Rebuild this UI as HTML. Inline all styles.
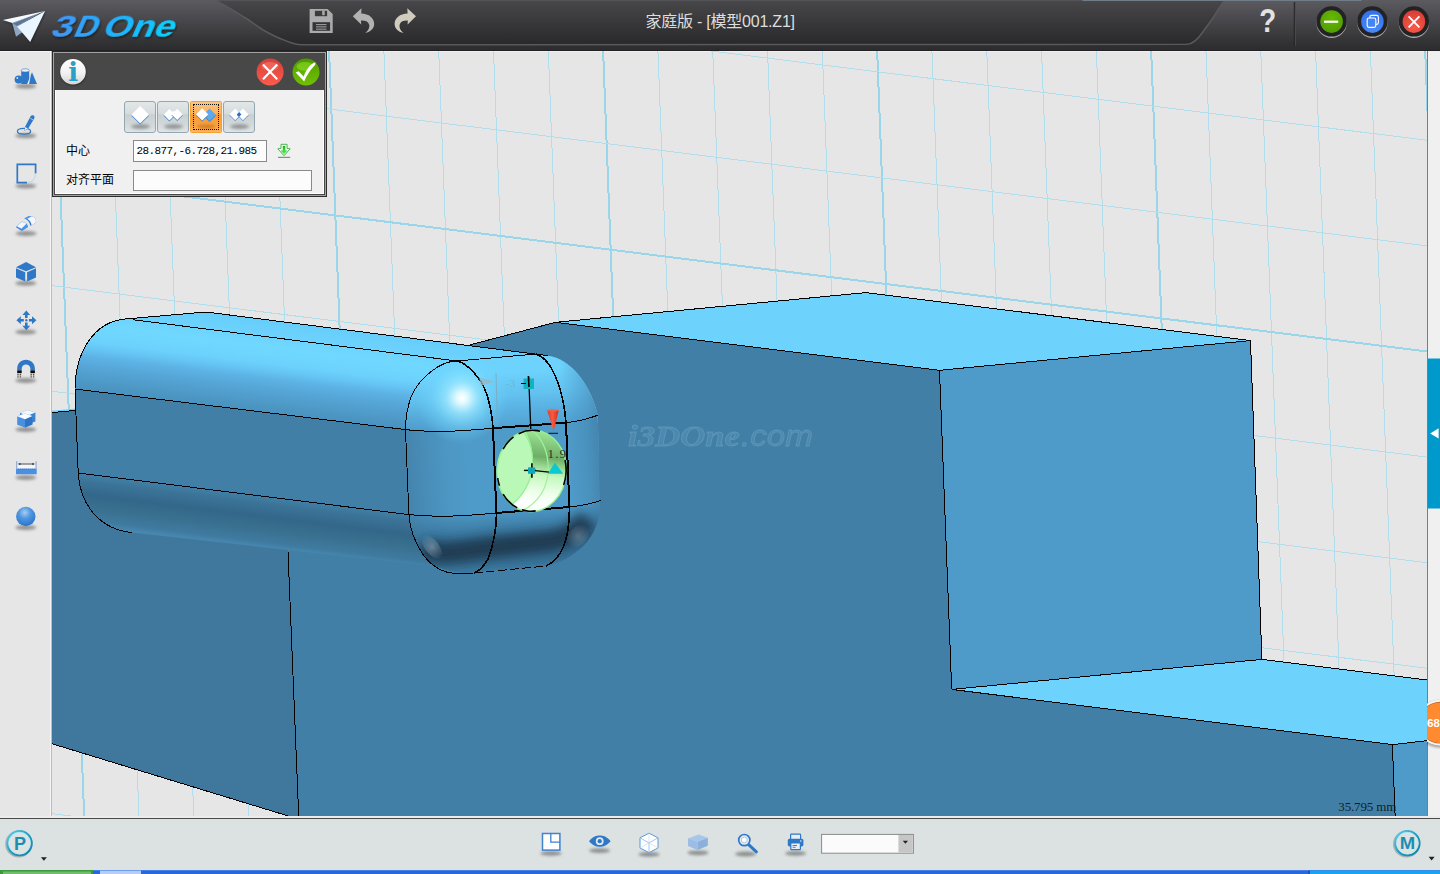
<!DOCTYPE html>
<html lang="zh"><head><meta charset="utf-8"><title>3DOne</title>
<style>
html,body{margin:0;padding:0;}
body{width:1440px;height:874px;overflow:hidden;position:relative;background:#e6e6e6;
 font-family:"Liberation Sans","Noto Sans CJK SC",sans-serif;}
.abs{position:absolute;}
svg{display:block;}
svg text{font-family:"Liberation Sans","Noto Sans CJK SC",sans-serif;}
.gm{stroke:#b1deed;stroke-width:1;shape-rendering:crispEdges;}
.gM{stroke:#99d6ea;stroke-width:2;shape-rendering:crispEdges;}
.e{stroke:#000;stroke-width:1;fill:none;stroke-linecap:butt;stroke-linejoin:round;shape-rendering:crispEdges;}
.eb{stroke:#000;stroke-width:2;fill:none;stroke-linecap:butt;stroke-linejoin:round;shape-rendering:crispEdges;}

.tb{left:0;top:0;width:1440px;height:51px;}
.dlg{left:52px;top:51px;width:275px;height:146px;background:#2c2c2c;}
.dlg .in{position:absolute;left:1px;top:1px;right:1px;bottom:1px;background:#a2a2a2;}
.dlg .hd{position:absolute;left:2px;top:2px;right:2px;height:37px;background:#484848;}
.dlg .bd{position:absolute;left:2px;top:39px;right:2px;bottom:2px;box-sizing:border-box;background:#f0f0f0;border:1px solid #484848;border-top:none;}
.dlg .bd:after{content:"";position:absolute;left:0;top:0;right:0;bottom:0;border:1px solid #fff;border-top:none;}
.lbl{position:absolute;font-size:12px;line-height:14px;color:#000;white-space:nowrap;}
.inp{position:absolute;box-sizing:border-box;border:1px solid #8a8a8a;background:#fcfcfc;}
.inp span{position:absolute;left:2.5px;top:3px;font-family:"Liberation Mono",monospace;font-size:11px;line-height:14px;letter-spacing:-0.6px;color:#000;white-space:nowrap;}
.btn{position:absolute;top:50px;width:31.5px;height:32px;box-sizing:border-box;border:1px solid #93a7b1;border-radius:3px;
 background:linear-gradient(#e2e7e8 0%,#d6dcde 40%,#c9d0d2 42%,#d3d9db 75%,#dfe4e5 100%);}
.btn.on{border-color:#f5a22c;border-radius:1.5px;background:linear-gradient(#fcc47e 0%,#fbb25c 40%,#f89a30 42%,#f9a545 80%,#fbb464 100%);}
.btn.on:after{content:"";position:absolute;left:2px;top:2px;right:2px;bottom:2px;border:1.5px dotted #111;}
.bb{left:0;top:818px;width:1440px;height:52px;background:#dce1e1;border-top:1px solid #4a4a4a;box-sizing:border-box;}

</style></head><body>
<svg class="abs" style="left:0;top:0" width="1440" height="874" viewBox="0 0 1440 874">
<defs>

<linearGradient id="gBody" gradientUnits="userSpaceOnUse" x1="240" y1="316.3" x2="212.2" y2="541.2">
 <stop offset="0" stop-color="#66ccfa"/>
 <stop offset="0.07" stop-color="#6dd3fd"/>
 <stop offset="0.12" stop-color="#70d8ff"/>
 <stop offset="0.19" stop-color="#6cd2fc"/>
 <stop offset="0.225" stop-color="#65c4f4"/>
 <stop offset="0.257" stop-color="#5db3e5"/>
 <stop offset="0.307" stop-color="#55a5d6"/>
 <stop offset="0.374" stop-color="#4d97c4"/>
 <stop offset="0.4070" stop-color="#4a92be"/>
 <stop offset="0.4075" stop-color="#427fa6"/>
 <stop offset="0.7757" stop-color="#427fa6"/>
 <stop offset="0.81" stop-color="#3b7397"/>
 <stop offset="0.865" stop-color="#33678a"/>
 <stop offset="0.92" stop-color="#39708f"/>
 <stop offset="0.975" stop-color="#3f7a9f"/>
 <stop offset="1" stop-color="#4788b1"/>
</linearGradient>
<linearGradient id="gCapX" gradientUnits="userSpaceOnUse" x1="405" y1="470" x2="601" y2="458">
 <stop offset="0" stop-color="#4483ab"/>
 <stop offset="0.10" stop-color="#488db8"/>
 <stop offset="0.22" stop-color="#4d97c4"/>
 <stop offset="0.32" stop-color="#4e9ac8"/>
 <stop offset="0.84" stop-color="#4e9ac8"/>
 <stop offset="0.93" stop-color="#4a92be"/>
 <stop offset="1" stop-color="#4485ae"/>
</linearGradient>
<linearGradient id="gCapTop" gradientUnits="userSpaceOnUse" x1="500" y1="352" x2="506" y2="432">
 <stop offset="0" stop-color="#6dd3fd" stop-opacity="1"/>
 <stop offset="0.25" stop-color="#6dd3fd" stop-opacity="1"/>
 <stop offset="0.55" stop-color="#66c8f6" stop-opacity="0.85"/>
 <stop offset="0.85" stop-color="#5cb8ea" stop-opacity="0.5"/>
 <stop offset="1" stop-color="#56aee0" stop-opacity="0.25"/>
</linearGradient>
<linearGradient id="gCapBot" gradientUnits="userSpaceOnUse" x1="498" y1="508" x2="502.6" y2="574">
 <stop offset="0" stop-color="#3a7aa3" stop-opacity="0"/>
 <stop offset="0.2" stop-color="#37739a" stop-opacity="0.45"/>
 <stop offset="0.5" stop-color="#2f6386" stop-opacity="0.9"/>
 <stop offset="0.8" stop-color="#356e93" stop-opacity="0.95"/>
 <stop offset="1" stop-color="#3f7ca2" stop-opacity="0.95"/>
</linearGradient>
<filter id="bl6" x="-20%" y="-60%" width="140%" height="220%"><feGaussianBlur stdDeviation="5.5"/></filter>
<radialGradient id="gSpec" gradientUnits="userSpaceOnUse" cx="462" cy="398" r="46">
 <stop offset="0" stop-color="#ffffff" stop-opacity="1"/>
 <stop offset="0.12" stop-color="#e8fcff" stop-opacity="0.95"/>
 <stop offset="0.35" stop-color="#9eeaff" stop-opacity="0.75"/>
 <stop offset="0.65" stop-color="#78dcff" stop-opacity="0.4"/>
 <stop offset="1" stop-color="#6dd3fd" stop-opacity="0"/>
</radialGradient>
<radialGradient id="gSpecB" gradientUnits="userSpaceOnUse" cx="432" cy="547" r="14">
 <stop offset="0" stop-color="#a8c4d6" stop-opacity="0.5"/>
 <stop offset="1" stop-color="#a8c0d0" stop-opacity="0"/>
</radialGradient>
<radialGradient id="gSpecC" gradientUnits="userSpaceOnUse" cx="578" cy="536" r="13">
 <stop offset="0" stop-color="#90a8b8" stop-opacity="0.45"/>
 <stop offset="1" stop-color="#90a8b8" stop-opacity="0"/>
</radialGradient>
<linearGradient id="gRightDark" gradientUnits="userSpaceOnUse" x1="560" y1="380" x2="600" y2="376">
 <stop offset="0" stop-color="#4a92be" stop-opacity="0"/>
 <stop offset="0.6" stop-color="#4a92be" stop-opacity="0.5"/>
 <stop offset="1" stop-color="#4585ad" stop-opacity="0.9"/>
</linearGradient>
<linearGradient id="gCyl" gradientUnits="userSpaceOnUse" x1="545" y1="430" x2="535" y2="512">
 <stop offset="0" stop-color="#a4e89c"/>
 <stop offset="0.18" stop-color="#84c87c"/>
 <stop offset="0.33" stop-color="#6eae68"/>
 <stop offset="0.45" stop-color="#9cdc94"/>
 <stop offset="0.55" stop-color="#c4f8be"/>
 <stop offset="0.75" stop-color="#ecffe8"/>
 <stop offset="0.9" stop-color="#ffffff"/>
 <stop offset="1" stop-color="#f4fff0"/>
</linearGradient>
<linearGradient id="gCone" x1="0" y1="0" x2="1" y2="0">
 <stop offset="0" stop-color="#d8382a"/>
 <stop offset="0.45" stop-color="#f85a40"/>
 <stop offset="1" stop-color="#c83020"/>
</linearGradient>
<clipPath id="cSil"><path d="M75,389 C75.5,352 94,321.5 125.5,319 L206,312 L548,355.7 C570,358.5 591,384 597.7,415.3 L600.3,504 C600.6,521 593,537 584,545.5 C572,556.5 560,563.5 546,566 L474,573 C462,574.3 449,571.5 435,566.2 L131.8,532.6 C101,529.5 80,506 78.2,473 Z"/></clipPath>
<clipPath id="cCap"><path d="M457,361 C440,361 419,378 411,397 C407.5,407 405.6,418 405.5,429.6 L408.9,514.6 C409.5,527 413,540 424,556 C433,567 444,573 455,573.3 L474,573 L546,566 C560,563.5 572,556.5 584,545.5 C593,537 600.6,521 600.3,504 L597.7,415.3 C591,384 570,358.5 548,355.7 L536,354 Z"/></clipPath>
<clipPath id="cGreen"><ellipse cx="531.7" cy="470.8" rx="34.7" ry="40.8" transform="rotate(4 531.7 470.8)"/></clipPath>
<filter id="bl1" x="-20%" y="-20%" width="140%" height="140%"><feGaussianBlur stdDeviation="1.2"/></filter>
<filter id="bl3" x="-20%" y="-20%" width="140%" height="140%"><feGaussianBlur stdDeviation="3"/></filter>

<clipPath id="vp"><rect x="52" y="50" width="1375" height="766"/></clipPath>
</defs>
<rect x="0" y="0" width="1440" height="874" fill="#e6e6e6"/>
<rect x="52" y="51" width="1375" height="1" fill="#f0f0f0"/>
<g clip-path="url(#vp)">
<line x1="0.24" y1="50" x2="29.35" y2="816" class="gm"/>
<line x1="55.04" y1="50" x2="84.15" y2="816" class="gM"/>
<line x1="109.85" y1="50" x2="138.96" y2="816" class="gm"/>
<line x1="164.65" y1="50" x2="193.76" y2="816" class="gm"/>
<line x1="219.46" y1="50" x2="248.57" y2="816" class="gm"/>
<line x1="274.26" y1="50" x2="303.37" y2="816" class="gm"/>
<line x1="329.07" y1="50" x2="358.18" y2="816" class="gM"/>
<line x1="383.87" y1="50" x2="412.98" y2="816" class="gm"/>
<line x1="438.68" y1="50" x2="467.79" y2="816" class="gm"/>
<line x1="493.48" y1="50" x2="522.59" y2="816" class="gm"/>
<line x1="548.29" y1="50" x2="577.4" y2="816" class="gm"/>
<line x1="603.09" y1="50" x2="632.2" y2="816" class="gM"/>
<line x1="657.9" y1="50" x2="687.01" y2="816" class="gm"/>
<line x1="712.7" y1="50" x2="741.81" y2="816" class="gm"/>
<line x1="767.51" y1="50" x2="796.62" y2="816" class="gm"/>
<line x1="822.31" y1="50" x2="851.42" y2="816" class="gm"/>
<line x1="877.12" y1="50" x2="906.23" y2="816" class="gM"/>
<line x1="931.92" y1="50" x2="961.03" y2="816" class="gm"/>
<line x1="986.73" y1="50" x2="1015.84" y2="816" class="gm"/>
<line x1="1041.53" y1="50" x2="1070.64" y2="816" class="gm"/>
<line x1="1096.34" y1="50" x2="1125.45" y2="816" class="gm"/>
<line x1="1151.14" y1="50" x2="1180.25" y2="816" class="gM"/>
<line x1="1205.95" y1="50" x2="1235.06" y2="816" class="gm"/>
<line x1="1260.75" y1="50" x2="1289.86" y2="816" class="gm"/>
<line x1="1315.56" y1="50" x2="1344.67" y2="816" class="gm"/>
<line x1="1370.36" y1="50" x2="1399.47" y2="816" class="gm"/>
<line x1="1425.17" y1="50" x2="1454.28" y2="816" class="gM"/>
<line x1="1479.97" y1="50" x2="1509.08" y2="816" class="gm"/>
<line x1="52" y1="-136.76" x2="1427" y2="34.7" class="gm"/>
<line x1="52" y1="-31.16" x2="1427" y2="140.3" class="gm"/>
<line x1="52" y1="74.44" x2="1427" y2="245.9" class="gm"/>
<line x1="52" y1="180.04" x2="1427" y2="351.5" class="gM"/>
<line x1="52" y1="285.64" x2="1427" y2="457.1" class="gm"/>
<line x1="52" y1="391.24" x2="1427" y2="562.7" class="gm"/>
<line x1="52" y1="496.84" x2="1427" y2="668.3" class="gm"/>
<line x1="52" y1="602.44" x2="1427" y2="773.9" class="gm"/>
<line x1="52" y1="708.04" x2="1427" y2="879.5" class="gM"/>
<line x1="52" y1="813.64" x2="1427" y2="985.1" class="gm"/>
<line x1="52" y1="919.24" x2="1427" y2="1090.7" class="gm"/>
<polygon points="52,412.6 76,410.4 300,400 288,552 298.8,818 287.5,815.75 52,743.75" fill="#3f789c"/>
<line x1="52" y1="411.6" x2="76" y2="409.4" stroke="#6dd3fd" stroke-width="1.6"/>
<polygon points="288,552 300,400 467,345.7 555.6,322.3 939.5,370.3 951.7,689.4 1392.4,744.6 1395.2,818 298.8,818" fill="#427fa6"/>
<polygon points="555.6,322.3 866,292.6 1250.5,340.6 939.5,370.3" fill="#6dd3fd"/>
<polygon points="939.5,370.3 1250.5,340.6 1261.9,659.4 951.7,689.4" fill="#4e9ac8"/>
<polygon points="951.7,689.4 1261.9,659.4 1428,680.1 1428,740.6 1392.4,744.6" fill="#6dd3fd"/>
<polygon points="1392.4,744.6 1428,740.6 1428,818 1395.2,818" fill="#4e9ac8"/>
<line x1="555.6" y1="322.3" x2="866" y2="292.6" class="e"/>
<line x1="866" y1="292.6" x2="1250.5" y2="340.6" class="e"/>
<line x1="1250.5" y1="340.6" x2="939.5" y2="370.3" class="e"/>
<line x1="939.5" y1="370.3" x2="555.6" y2="322.3" class="e"/>
<line x1="555.6" y1="322.3" x2="467" y2="345.7" class="e"/>
<line x1="939.5" y1="370.3" x2="951.7" y2="689.4" class="e"/>
<line x1="1250.5" y1="340.6" x2="1261.9" y2="659.4" class="e"/>
<line x1="951.7" y1="689.4" x2="1261.9" y2="659.4" class="e"/>
<line x1="1261.9" y1="659.4" x2="1428" y2="680.1" class="e"/>
<line x1="951.7" y1="689.4" x2="1392.4" y2="744.6" class="e"/>
<line x1="1392.4" y1="744.6" x2="1428" y2="740.6" class="e"/>
<line x1="1392.4" y1="744.6" x2="1395.2" y2="818" class="e"/>
<line x1="288" y1="552" x2="298.8" y2="818" class="e"/>
<line x1="52" y1="743.75" x2="287.5" y2="815.75" class="e"/>
<line x1="52" y1="412.6" x2="76" y2="410.4" class="e"/>
<text x="628" y="446" font-size="30" fill="#5a93b8" fill-opacity="0.55" stroke="#7fb0cf" stroke-opacity="0.45" stroke-width="0.8" opacity="0.9"><tspan style="font-family:'Liberation Serif',serif;font-style:italic;font-weight:bold" textLength="112" lengthAdjust="spacingAndGlyphs">i3DOne</tspan><tspan x="741" style="font-family:'Liberation Sans',sans-serif;font-style:italic" textLength="72" lengthAdjust="spacingAndGlyphs">.com</tspan></text>
<path d="M75,389 C75.5,352 94,321.5 125.5,319 L206,312 L548,355.7 C570,358.5 591,384 597.7,415.3 L600.3,504 C600.6,521 593,537 584,545.5 C572,556.5 560,563.5 546,566 L474,573 C462,574.3 449,571.5 435,566.2 L131.8,532.6 C101,529.5 80,506 78.2,473 Z" fill="url(#gBody)"/>
<g clip-path="url(#cSil)">
<g clip-path="url(#cCap)">
<path d="M457,361 C440,361 419,378 411,397 C407.5,407 405.6,418 405.5,429.6 L408.9,514.6 C409.5,527 413,540 424,556 C433,567 444,573 455,573.3 L474,573 L546,566 C560,563.5 572,556.5 584,545.5 C593,537 600.6,521 600.3,504 L597.7,415.3 C591,384 570,358.5 548,355.7 L536,354 Z" fill="url(#gCapX)"/>
<path d="M400,340 L610,340 L610,414 C590,420 578,421.3 566,422.7 L493,428.2 C480,429.3 468,430.5 455,431 C440,431.6 420,431.3 405.5,429.6 L400,429 Z" fill="url(#gCapTop)"/>
<path d="M548,352 L610,352 L610,414 C590,420 578,421.3 566,422.7 C564.5,405 561.5,392 557.4,381.5 C552.5,368 545,357 536,354 Z" fill="url(#gRightDark)"/>
<path d="M400,514 L408.9,514.6 C422,516 440,516.5 453.5,516 C468,515.5 482,514.3 496.4,513 L569.4,507 C581,505.7 592,503.5 610,499 L610,580 L400,580 Z" fill="url(#gCapBot)"/>
<clipPath id="cBot"><path d="M400,514 L408.9,514.6 C422,516 440,516.5 453.5,516 C468,515.5 482,514.3 496.4,513 L569.4,507 C581,505.7 592,503.5 610,499 L610,580 L400,580 Z"/></clipPath>
<g clip-path="url(#cBot)"><path d="M424,548 C430,552 436,553 442,553 C458,553.5 478,549 493,547.5 L548,541.5 C564,539.5 577,533 588,519" fill="none" stroke="#1b3a50" stroke-opacity="0.95" stroke-width="21" filter="url(#bl6)"/></g>
<circle cx="462" cy="398" r="46" fill="url(#gSpec)"/>
<ellipse cx="432" cy="547" rx="14" ry="7" transform="rotate(52 432 547)" fill="url(#gSpecB)"/>
<ellipse cx="578" cy="536" rx="13" ry="9" transform="rotate(-50 578 536)" fill="url(#gSpecC)"/>
</g></g>
<path d="M131.8,532.6 C101,529.5 80,506 78.2,473 L75,389 C75.5,352 94,321.5 125.5,319 L206,312 L548,355.7" class="e"/>
<path d="M133,319.7 L457,361 L536,354" class="e"/>
<path d="M75,389 L405.5,429.6 C420,431.3 440,431.6 455,431 C468,430.5 480,429.3 493,428.2 L566,422.7 C578,421.3 589,418.5 597.7,415.3" class="e"/>
<path d="M78.2,473 L408.9,514.6 C422,516 440,516.5 453.5,516 C468,515.5 482,514.3 496.4,513 L569.4,507 C581,505.7 592,503.5 600.6,500.6" class="e"/>
<path d="M457,361 C440,361 419,378 411,397 C407.5,407 405.6,418 405.5,429.6 L408.9,514.6 C409.5,527 413,540 424,556 C433,567 444,573 455,573.3 L474,573" class="e"/>
<path d="M457,361 C466,362.5 474,372 481,381.5 C487,392 491.5,408 493,428 L496.4,513 C496.6,526 495,540 488,559 C484,566 479.5,571 474,573" class="e" style="stroke-width:1.6"/>
<path d="M536,354 C545,357 552.5,368 557.4,381.5 C561.5,392 564.5,405 566,422.7 L569.4,507 C569.6,520 568,535 563.4,547 C560,555 554,562.5 546,566" class="e" style="stroke-width:1.6"/>
<path d="M474,573 L546,566" class="e" style="stroke-dasharray:9 3"/>
<path d="M493,428.2 L566,422.7 L569.4,507 L496.4,513 Z" class="eb"/>
<polygon points="479,377.5 495,381.5 481,386" fill="#9ab6bf" fill-opacity="0.75"/>
<line x1="496" y1="373" x2="497.5" y2="425" stroke="#7fa6b8" stroke-width="1" stroke-opacity="0.8"/>
<text x="506" y="387" font-size="11" style="font-family:'Liberation Serif',serif" fill="#6fb6d6">-3</text>
<line x1="528.7" y1="377" x2="530.8" y2="429.5" stroke="#000" stroke-width="1.3"/>
<rect x="523.5" y="378.5" width="10.5" height="10.5" fill="#10b4c0"/>
<line x1="521" y1="383.5" x2="526" y2="383.5" stroke="#000" stroke-width="1"/>
<line x1="528.4" y1="376" x2="529" y2="387" stroke="#000" stroke-width="1.6"/>
<g>
<ellipse cx="531.7" cy="470.8" rx="34.7" ry="40.8" transform="rotate(4 531.7 470.8)" fill="#b9f8b6"/>
<g clip-path="url(#cGreen)">
<path d="M522.8,428 C532,440 533.5,455 532.5,465 C531,483 523,496 510,506 L520,520 L575,520 L575,425 Z" fill="url(#gCyl)"/>
<path d="M522.8,431 C531,441 533.5,455 532.5,465 C531,483 523,496 511,505" fill="none" stroke="#90ee90" stroke-width="1.2"/>
<path d="M533,430.5 C545,442 549,458 548,473 C546.5,490 537,503 522,511" fill="none" stroke="#9df29a" stroke-width="1.2"/>
</g>
<ellipse cx="531.7" cy="470.8" rx="34.7" ry="40.8" transform="rotate(4 531.7 470.8)" fill="none" stroke="#98f090" stroke-width="1.4"/>
<ellipse cx="531.7" cy="470.8" rx="34.4" ry="40.5" transform="rotate(4 531.7 470.8)" fill="none" stroke="#000" stroke-width="1.6" stroke-dasharray="14 5 20 9 8 30 16 6 22 40" stroke-dashoffset="118"/>
</g>
<text x="547.5" y="458.4" font-size="13" style="font-family:'Liberation Serif',serif" fill="#18241a" fill-opacity="0.9" textLength="18.5">1.9</text>
<line x1="523.9" y1="470.4" x2="536" y2="470.4" stroke="#000" stroke-width="1.4"/>
<line x1="531.9" y1="463.2" x2="531.9" y2="477.8" stroke="#000" stroke-width="1.6"/>
<rect x="528" y="467.4" width="7.2" height="6.4" fill="#10a8b8"/>
<line x1="535" y1="470.6" x2="549" y2="472.2" stroke="#000" stroke-width="1.2"/>
<polygon points="554.8,462.6 563.2,473.8 548,473.8" fill="#0cc8d0"/>
<polygon points="547.2,410.2 558.8,410.2 553.6,431.5" fill="url(#gCone)"/>
<ellipse cx="553" cy="410.4" rx="5.8" ry="1.2" fill="#f0604a"/>
<line x1="548.5" y1="433.3" x2="558" y2="433.3" stroke="#000" stroke-width="0.9"/>
<text x="1338.3" y="810.6" font-size="13" style="font-family:'Liberation Serif',serif" fill="#0a1620" fill-opacity="0.95" textLength="58" lengthAdjust="spacing">35.795 mm</text>
</g>
<rect x="0" y="50" width="51" height="768" fill="#e6e6e6"/>
<rect x="50" y="51" width="1" height="766" fill="#f5f5f5"/>
<rect x="51" y="51" width="1" height="766" fill="#a9c1d0"/>
<rect x="1427" y="50" width="13" height="768" fill="#f0f0f0"/>
<rect x="1427" y="50" width="1" height="767" fill="#7c7c7c"/>
<rect x="1428" y="358.5" width="12" height="150" fill="#0099cc"/>
<polygon points="1430.2,433.4 1438.6,428.2 1438.6,438.6" fill="#ffffff"/>
<rect x="0" y="51" width="51" height="1" fill="#f4f4f4"/>
<rect x="0" y="816" width="1440" height="2" fill="#ececec"/>
<clipPath id="cBub"><rect x="1427" y="680" width="13" height="90"/></clipPath>
<g clip-path="url(#cBub)">
<circle cx="1440" cy="724.2" r="23.6" fill="#000" fill-opacity="0.3" filter="url(#bl1)"/>
<circle cx="1440" cy="722.7" r="22.9" fill="#f4f4f4"/>
<circle cx="1440" cy="722.7" r="20.9" fill="#c9631e"/>
<circle cx="1440" cy="722.7" r="20.2" fill="#ff8a30"/>
<text x="1427.2" y="726.5" font-size="10.8" font-weight="bold" fill="#fff" textLength="12.6" lengthAdjust="spacingAndGlyphs">68</text>
</g>
</svg>
<svg class="abs tb" width="1440" height="51" viewBox="0 0 1440 51">
<defs>
<linearGradient id="tbO" x1="0" y1="0" x2="0" y2="1"><stop offset="0" stop-color="#5b5b60"/><stop offset="0.5" stop-color="#434346"/><stop offset="0.9" stop-color="#2f2f31"/><stop offset="1" stop-color="#2c2c2e"/></linearGradient>
<linearGradient id="tbI" x1="0" y1="0" x2="0" y2="1"><stop offset="0" stop-color="#48484b"/><stop offset="0.5" stop-color="#38383a"/><stop offset="1" stop-color="#29292b"/></linearGradient>
<linearGradient id="logoG" gradientUnits="userSpaceOnUse" x1="53" y1="0" x2="175" y2="0"><stop offset="0" stop-color="#3f97f8"/><stop offset="0.35" stop-color="#28aafc"/><stop offset="0.7" stop-color="#14c0fe"/><stop offset="1" stop-color="#08d4ff"/></linearGradient>
<radialGradient id="gGreen" cx="0.5" cy="0.35" r="0.7"><stop offset="0" stop-color="#66b800"/><stop offset="1" stop-color="#4e9c00"/></radialGradient>
<radialGradient id="gBlue" cx="0.5" cy="0.75" r="0.8"><stop offset="0" stop-color="#4f8ff8"/><stop offset="1" stop-color="#2f6fe8"/></radialGradient>
<radialGradient id="gRed" cx="0.5" cy="0.75" r="0.8"><stop offset="0" stop-color="#f85a4a"/><stop offset="1" stop-color="#d83a30"/></radialGradient>
<filter id="tsh" x="-10%" y="-20%" width="120%" height="150%"><feGaussianBlur stdDeviation="1.2"/></filter><filter id="lsh" x="-10%" y="-30%" width="120%" height="170%"><feGaussianBlur in="SourceAlpha" stdDeviation="1.2"/><feOffset dx="1.6" dy="1.6"/><feComponentTransfer><feFuncA type="linear" slope="0.4"/></feComponentTransfer><feMerge><feMergeNode/><feMergeNode in="SourceGraphic"/></feMerge></filter>
</defs>
<rect width="1440" height="51" fill="url(#tbO)"/><rect y="50" width="1440" height="1" fill="#222224"/>
<path d="M215.4,0 C228,7 238,13.5 246.7,18.75 C254,23.5 259,27.5 265.4,31.25 C272,35 278,38 284.2,40.1 C290,42.5 294,44.6 302,44.8 L1187,44.3 C1192,44.1 1197,40.5 1202.8,32 C1206,27.5 1209,23.5 1211,20.8 C1215,14.5 1219.5,7.5 1224.5,0 Z" fill="url(#tbI)" stroke="#58585d" stroke-width="1.5"/>
<rect x="1082.5" y="0" width="279" height="1" fill="#707c88"/>
<g>
<polygon points="3.5,21.5 46,12.2 31,43 17.5,27.5 16.5,37.5 12,24" fill="#000" fill-opacity="0.35" filter="url(#tsh)"/>
<polygon points="12.2,22.9 41,12.2 18,26 22.2,32.3 16,36.8" fill="#8fa6c4"/>
<polygon points="13,23.5 38,13.5 17.2,26" fill="#5c7596"/>
<polygon points="2.9,20.1 45.1,11 12.2,22.9" fill="#f4faff"/>
<polygon points="17,26.4 45.1,11 30.2,42" fill="#e9f5ff"/>
</g>
<g transform="translate(0,36.7) skewX(-24)" fill="url(#logoG)" filter="url(#lsh)"><text y="0" font-size="30.6" font-weight="bold"><tspan x="49" textLength="21.5" lengthAdjust="spacingAndGlyphs">3</tspan><tspan x="72" textLength="23" lengthAdjust="spacingAndGlyphs">D</tspan><tspan x="100.8" font-size="31" textLength="71.5" lengthAdjust="spacingAndGlyphs">One</tspan></text></g>
<g fill="#ababab"><path d="M309.6,8.9 L327.5,8.9 L332.7,14 L332.7,33 L309.6,33 Z"/></g>
<rect x="314.9" y="10.8" width="12.2" height="5.4" fill="#3a3a3d"/>
<rect x="322.2" y="10.8" width="2.5" height="4.4" fill="#ababab"/>
<rect x="312.5" y="22.2" width="17.6" height="8.6" fill="#343437"/>
<rect x="316" y="24.0" width="10.5" height="1.1" fill="#9a9a9a"/>
<rect x="316" y="26.3" width="10.5" height="1.1" fill="#9a9a9a"/>
<rect x="316" y="28.6" width="10.5" height="1.1" fill="#9a9a9a"/>
<path d="M352.8,16.2 L361.5,8.3 L361.2,13.4 C369,13.6 374.4,18 374.2,24 C374,29 370,32 365.2,33 C368.5,30.5 370,27 369,24.2 C368,21.4 365,20.4 361,20.6 L361.2,24.4 Z" fill="#b2b2b2"/>
<path d="M416,16.2 L407.3,8.3 L407.6,13.4 C399.8,13.6 394.4,18 394.6,24 C394.8,29 398.8,32 403.6,33 C400.3,30.5 398.8,27 399.8,24.2 C400.8,21.4 403.8,20.4 407.8,20.6 L407.6,24.4 Z" fill="#cfccbd"/>
<text x="645.5" y="27" font-size="16" fill="#dedede" textLength="149.5" lengthAdjust="spacing">家庭版 - [模型001.Z1]</text>
<text transform="translate(1267.6,32.4) scale(0.84,1)" x="0" y="0" font-size="33" font-weight="bold" fill="#e2e2e2" text-anchor="middle">?</text>
<rect x="1293.8" y="2" width="1" height="44" fill="#1d1d1f"/><rect x="1294.8" y="2" width="1" height="44" fill="#4c4c50"/>
<circle cx="1331.6" cy="22.8" r="15.2" fill="#a8a8a8"/>
<circle cx="1331.6" cy="21.4" r="15.2" fill="#232325"/>
<circle cx="1331.6" cy="21.6" r="11.3" fill="url(#gGreen)"/>
<circle cx="1372.4" cy="22.8" r="15.2" fill="#a8a8a8"/>
<circle cx="1372.4" cy="21.4" r="15.2" fill="#232325"/>
<circle cx="1372.4" cy="21.6" r="11.3" fill="url(#gBlue)"/>
<circle cx="1413.9" cy="22.8" r="15.2" fill="#a8a8a8"/>
<circle cx="1413.9" cy="21.4" r="15.2" fill="#232325"/>
<circle cx="1413.9" cy="21.6" r="11.3" fill="url(#gRed)"/>
<rect x="1324" y="20.6" width="14.2" height="2.2" fill="#fff"/>
<rect x="1369.8" y="15.4" width="8.6" height="9" rx="1.8" fill="none" stroke="#fff" stroke-width="1.1"/>
<rect x="1367.2" y="18" width="8.6" height="9.4" rx="1.8" fill="#4585f4" stroke="#fff" stroke-width="1.1"/>
<path d="M1408.6,16.4 L1419.4,27.4 M1419.4,16.4 L1408.6,27.4" stroke="#fff" stroke-width="1.8" fill="none"/>
</svg>
<svg class="abs" style="left:0;top:50px" width="52" height="767" viewBox="0 50 52 767">
<defs><filter id="isd" x="-50%" y="-150%" width="200%" height="400%"><feGaussianBlur stdDeviation="1.5"/></filter><radialGradient id="gBall" cx="0.45" cy="0.3" r="0.7"><stop offset="0" stop-color="#a6cdf2"/><stop offset="0.45" stop-color="#4f95e0"/><stop offset="1" stop-color="#2b74cc"/></radialGradient></defs>
<ellipse cx="25.8" cy="86.2" rx="10.5" ry="2.5" fill="#000" fill-opacity="0.36" filter="url(#isd)"/>
<circle cx="18.6" cy="79.6" r="4" fill="#2f78c8"/>
<circle cx="17.3" cy="78" r="0.9" fill="#cfe2f6"/>
<path d="M21.2,70.5 L29.2,70.5 L29.2,84 L21.2,84 Z" fill="#2f78c8"/>
<ellipse cx="25.2" cy="70.4" rx="4" ry="1.6" fill="#eef4fb" stroke="#2f78c8" stroke-width="0.6"/>
<polygon points="32,72.3 37,84 27,84" fill="#2f78c8"/>
<polygon points="31,74.5 27.2,84 29,84" fill="#f2f6fb"/>
<ellipse cx="25.8" cy="135.8" rx="10.5" ry="2.5" fill="#000" fill-opacity="0.36" filter="url(#isd)"/>
<ellipse cx="24" cy="131.3" rx="6.6" ry="2.9" fill="none" stroke="#2f78c8" stroke-width="1.3"/>
<path d="M24.2,131 L25.2,126.6 L30.6,116.2 C31.2,115.2 32.6,115 33.6,115.6 C34.6,116.2 34.8,117.4 34.2,118.4 L28.2,128.4 Z" fill="#2f78c8"/>
<path d="M24.4,130.6 L25.4,127 L27.8,128.4 Z" fill="#e8f0fa"/>
<path d="M30.2,118.2 L33.2,120" stroke="#dbe8f6" stroke-width="0.7"/>
<ellipse cx="25.8" cy="186" rx="10.5" ry="2.5" fill="#000" fill-opacity="0.36" filter="url(#isd)"/>
<path d="M27,182.6 L17.3,182.6 L17.3,164.4 L35.6,164.4 L35.6,173.5" fill="none" stroke="#2f78c8" stroke-width="1.7"/>
<path d="M35.6,173.5 C35.4,178.8 32,182.4 27,182.6" fill="none" stroke="#c8d8ea" stroke-width="1.4"/>
<ellipse cx="26.1" cy="233.4" rx="10.5" ry="2.5" fill="#000" fill-opacity="0.36" filter="url(#isd)"/>
<polygon points="16,227.2 21.1,230.4 22.1,230.8 27.9,227 26.8,223.4 21.7,221.6 16.6,226.3" fill="#3c84d6"/>
<polygon points="21.4,228.9 26.8,223.4 27.9,227 22.1,230.8" fill="#4f95e4"/>
<polygon points="16.7,226.3 21.7,221.7 26.7,223.4 21.4,228.8" fill="#f3f7fc"/>
<path d="M24.3,218.6 L29,215.9 L31.6,216.3 C34,216.6 36,218.4 36,220.6 C36,222.6 34,224.4 31.6,225.3 L30.4,225.7 C29.6,222 27.6,219.6 24.3,218.6 Z" fill="#2f78cc"/>
<path d="M24.3,218.6 L29,215.9 L31.6,216.3 L27.2,219 Z" fill="#5a9ee8"/>
<path d="M27.2,219 L31.6,216.3 C34,216.6 36,218.4 36,220.6 C36,222.6 34,224.4 31.6,225.3 C31.2,222.4 29.8,220.2 27.2,219 Z" fill="#f3f7fc"/>
<ellipse cx="25.8" cy="283.2" rx="10.5" ry="2.5" fill="#000" fill-opacity="0.36" filter="url(#isd)"/>
<polygon points="26.1,262 36,267.2 26.1,271.2 16,267.2" fill="#2f78c8"/>
<polygon points="16,268.3 25.2,272.3 25.2,281.5 16,277.5" fill="#2f78c8"/>
<polygon points="27.1,272.3 36,268.3 36,277.5 27.1,281.5" fill="#2f78c8"/>
<ellipse cx="25.8" cy="332" rx="10.5" ry="2.5" fill="#000" fill-opacity="0.36" filter="url(#isd)"/>
<g fill="#2f78c8"><polygon points="26.3,310.6 30.2,315 27.6,315 27.6,318 25,318 25,315 22.4,315"/><polygon points="26.3,330.2 30.2,325.8 27.6,325.8 27.6,322.6 25,322.6 25,325.8 22.4,325.8"/><polygon points="16.4,320.2 20.8,316.2 20.8,318.9 23.8,318.9 23.8,321.5 20.8,321.5 20.8,324.2"/><polygon points="36.4,320.2 32,316.2 32,318.9 28.9,318.9 28.9,321.5 32,321.5 32,324.2"/><circle cx="26.3" cy="320.2" r="1.2"/></g>
<ellipse cx="25.8" cy="380.4" rx="10.5" ry="2.5" fill="#000" fill-opacity="0.36" filter="url(#isd)"/>
<path d="M17.2,370.4 L17.2,368.6 C17.2,363.4 21,359.8 26,359.8 C31,359.8 34.9,363.4 34.9,368.6 L34.9,370.4 L30.4,370.4 L30.4,368.8 C30.4,366 28.6,364.4 26,364.4 C23.4,364.4 21.7,366 21.7,368.8 L21.7,370.4 Z" fill="#2f78c8"/>
<rect x="17.2" y="370.4" width="4.5" height="2.7" fill="#0a0a0a"/><rect x="30.4" y="370.4" width="4.5" height="2.7" fill="#0a0a0a"/>
<line x1="18.0" y1="373.8" x2="18.0" y2="378" stroke="#555" stroke-width="1.4" stroke-dasharray="1.1 0.7"/>
<line x1="20.4" y1="373.8" x2="20.4" y2="378" stroke="#555" stroke-width="1.4" stroke-dasharray="1.1 0.7"/>
<line x1="31.2" y1="373.8" x2="31.2" y2="378" stroke="#555" stroke-width="1.4" stroke-dasharray="1.1 0.7"/>
<line x1="33.6" y1="373.8" x2="33.6" y2="378" stroke="#555" stroke-width="1.4" stroke-dasharray="1.1 0.7"/>
<ellipse cx="25.8" cy="429.5" rx="10.5" ry="2.5" fill="#000" fill-opacity="0.36" filter="url(#isd)"/>
<polygon points="20,413 27.4,410 35.4,412.6 35.4,421.4 28.6,424 20,421.4" fill="#3b82d2"/>
<polygon points="20,413 27.4,410 35.4,412.6 28,415.6" fill="#f4f8fd"/>
<polygon points="17.2,416.2 24.6,413.4 32.4,416 32.4,424.4 25,427.5 17.2,424.8" fill="#4a90e0"/>
<polygon points="25,419.2 32.4,416 32.4,424.4 25,427.5" fill="#2f74c4"/>
<polygon points="17.2,416.2 24.6,413.4 32.4,416 25,419.2" fill="#fafcff"/>
<ellipse cx="25.8" cy="477.6" rx="10.5" ry="2.5" fill="#000" fill-opacity="0.36" filter="url(#isd)"/>
<rect x="16" y="464.4" width="20.7" height="4.4" fill="#f6f6f6"/>
<rect x="16" y="468.6" width="20.7" height="5.6" fill="#4a90e2"/>
<rect x="16" y="461.2" width="1.3" height="8" fill="#8fb0d8"/><rect x="35.4" y="461.2" width="1.3" height="8" fill="#8fb0d8"/>
<line x1="18.6" y1="464" x2="34.2" y2="464" stroke="#444" stroke-width="0.9"/>
<polygon points="18.2,464 20.4,462.8 20.4,465.2" fill="#333"/><polygon points="34.6,464 32.4,462.8 32.4,465.2" fill="#333"/>
<line x1="18" y1="469.3" x2="35" y2="469.3" stroke="#2d6cb8" stroke-width="0.7" stroke-dasharray="0.8 1.2"/>
<ellipse cx="25.8" cy="527.6" rx="10.5" ry="2.5" fill="#000" fill-opacity="0.36" filter="url(#isd)"/>
<circle cx="25.8" cy="516.5" r="9.7" fill="url(#gBall)"/>
</svg>
<div class="abs dlg"><div class="in"></div><div class="hd"></div><div class="bd"></div>
<svg style="position:absolute;left:0;top:0" width="275" height="40" viewBox="52 51 275 40"><defs><linearGradient id="gInfo" x1="0" y1="0" x2="0" y2="1"><stop offset="0" stop-color="#ffffff"/><stop offset="0.55" stop-color="#f2f2f2"/><stop offset="1" stop-color="#d4d4d4"/></linearGradient><linearGradient id="gX" x1="0" y1="0" x2="0" y2="1"><stop offset="0" stop-color="#cf433b"/><stop offset="0.45" stop-color="#e84c42"/><stop offset="1" stop-color="#fb5b4f"/></linearGradient><linearGradient id="gOK" x1="0" y1="0" x2="0" y2="1"><stop offset="0" stop-color="#4a9800"/><stop offset="0.45" stop-color="#5fae00"/><stop offset="1" stop-color="#72bf06"/></linearGradient><filter id="dsh" x="-30%" y="-30%" width="160%" height="160%"><feGaussianBlur stdDeviation="1"/></filter><filter id="bsd" x="-50%" y="-150%" width="200%" height="400%"><feGaussianBlur stdDeviation="1.5"/></filter></defs><circle cx="73.4" cy="72.8" r="12.8" fill="#000" fill-opacity="0.4" filter="url(#dsh)"/><circle cx="73" cy="71.7" r="12.8" fill="url(#gInfo)"/><text x="73.2" y="81" font-size="26" font-weight="bold" text-anchor="middle" fill="#2a9fc8" style="font-family:'DejaVu Serif','Liberation Serif',serif">i</text><circle cx="270.1" cy="72" r="13.5" fill="url(#gX)"/><ellipse cx="270.1" cy="66.3" rx="8.6" ry="4.4" fill="#ff7a70" fill-opacity="0.55"/><path d="M263,64.6 L277.2,79.2 M277.2,64.6 L263,79.2" stroke="#fff" stroke-width="2.1" fill="none"/><circle cx="306" cy="72" r="13.5" fill="url(#gOK)"/><ellipse cx="305" cy="66.3" rx="8.4" ry="4.4" fill="#8fdc28" fill-opacity="0.6"/><path d="M295.6,72.6 L298.6,71.2 L303.6,76.6 C306,70 310,64 315.4,62.2 L315.2,65 C310.6,69 306.6,76 304.2,81.4 Z" fill="#fff"/></svg>
<div class="btn" style="left:72.3px"><svg width="29" height="30" viewBox="0 0 29 30" style="position:absolute;left:0;top:0"><ellipse cx="15.5" cy="24.6" rx="9.5" ry="2.4" fill="#000" fill-opacity="0.32" filter="url(#bsd)"/><polygon points="6.399999999999999,13.700000000000001 15.2,22.5 24.0,13.700000000000001 15.2,4.9" fill="#3a7fd0"/><polygon points="6.399999999999999,12.8 15.2,21.6 24.0,12.8 15.2,4.0" fill="#fff"/></svg></div>
<div class="btn" style="left:105.3px"><svg width="29" height="30" viewBox="0 0 29 30" style="position:absolute;left:0;top:0"><ellipse cx="15.5" cy="24.6" rx="9.5" ry="2.4" fill="#000" fill-opacity="0.32" filter="url(#bsd)"/><polygon points="5.7,13.700000000000001 11.4,19.4 17.1,13.700000000000001 11.4,8.0" fill="#3a7fd0"/><polygon points="5.7,12.8 11.4,18.5 17.1,12.8 11.4,7.1000000000000005" fill="#fff"/><polygon points="13.5,13.3 19.2,19.0 24.9,13.3 19.2,7.6000000000000005" fill="#3a7fd0"/><polygon points="13.5,12.4 19.2,18.1 24.9,12.4 19.2,6.7" fill="#fff"/><polygon points="15.3,8.8 17.6,11.2 15.3,13.6 13,11.2" fill="#fff"/></svg></div>
<div class="btn on" style="left:138.3px"><svg width="29" height="30" viewBox="0 0 29 30" style="position:absolute;left:0;top:0"><ellipse cx="15.5" cy="24.6" rx="9.5" ry="2.4" fill="#b05a00" fill-opacity="0.5" filter="url(#bsd)"/><polygon points="12.400000000000002,13.700000000000001 18.6,19.9 24.8,13.700000000000001 18.6,7.500000000000001" fill="#3a7fd0"/><polygon points="12.400000000000002,12.8 18.6,19.0 24.8,12.8 18.6,6.6000000000000005" fill="#5fa8ec"/><polygon points="4.999999999999999,13.3 11.2,19.5 17.4,13.3 11.2,7.1000000000000005" fill="#3a7fd0"/><polygon points="4.999999999999999,12.4 11.2,18.6 17.4,12.4 11.2,6.2" fill="#fff"/></svg></div>
<div class="btn" style="left:171.3px"><svg width="29" height="30" viewBox="0 0 29 30" style="position:absolute;left:0;top:0"><ellipse cx="15.5" cy="24.6" rx="9.5" ry="2.4" fill="#000" fill-opacity="0.32" filter="url(#bsd)"/><polygon points="5.3999999999999995,13.3 11.2,19.099999999999998 17.0,13.3 11.2,7.500000000000001" fill="#3a7fd0"/><polygon points="5.3999999999999995,12.4 11.2,18.2 17.0,12.4 11.2,6.6000000000000005" fill="#fff"/><polygon points="13.2,13.3 19,19.099999999999998 24.8,13.3 19,7.500000000000001" fill="#3a7fd0"/><polygon points="13.2,12.4 19,18.2 24.8,12.4 19,6.6000000000000005" fill="#fff"/><polygon points="15.1,10 17.4,12.4 15.1,14.8 12.8,12.4" fill="#2a6cc8"/></svg></div>
<div class="lbl" style="left:14px;top:93px">中心</div>
<div class="lbl" style="left:14px;top:122px">对齐平面</div>
<div class="inp" style="left:81px;top:89px;width:134px;height:22px"><span>28.877,-6.728,21.985</span></div>
<div class="inp" style="left:81px;top:119px;width:179px;height:21px"></div>
<svg style="position:absolute;left:224px;top:90px" width="16" height="18" viewBox="276 141 16 18"><defs><linearGradient id="gArr" x1="0" y1="0" x2="0" y2="1"><stop offset="0" stop-color="#1eaa1e"/><stop offset="0.55" stop-color="#3cd63c"/><stop offset="1" stop-color="#6af64a"/></linearGradient></defs><path d="M281,144.3 L287.1,144.3 L287.1,148.4 L290.2,148.8 L284,155.7 L277.8,148.8 L281,148.4 Z" fill="#eefbee" stroke="#4fb455" stroke-width="1"/><path d="M282.8,146 L285.3,146 L285.3,150.6 L287.4,150.6 L284,154.3 L280.6,150.6 L282.8,150.6 Z" fill="url(#gArr)"/><rect x="278" y="156.8" width="12.2" height="1.2" fill="#4fb062"/></svg>
</div>
<div class="abs bb"></div>
<svg class="abs" style="left:0;top:819px" width="1440" height="55" viewBox="0 819 1440 55">
<defs><filter id="isd2" x="-50%" y="-150%" width="200%" height="400%"><feGaussianBlur stdDeviation="1.5"/></filter><linearGradient id="gRing" x1="0" y1="0" x2="1" y2="1"><stop offset="0" stop-color="#5fd0ea"/><stop offset="0.5" stop-color="#1d9cc0"/><stop offset="1" stop-color="#1583a6"/></linearGradient></defs>
<circle cx="18.8" cy="844" r="12.6" fill="none" stroke="#5a6a70" stroke-opacity="0.4" stroke-width="2"/>
<circle cx="19.6" cy="843.2" r="12.1" fill="#dde2e2" stroke="url(#gRing)" stroke-width="2.1"/>
<circle cx="19.6" cy="843.2" r="10.9" fill="none" stroke="#b4ecf8" stroke-width="0.8"/>
<text x="20.0" y="849.8" font-size="18" font-weight="bold" text-anchor="middle" fill="#1c8eb2">P</text>
<circle cx="1406.6000000000001" cy="844" r="12.6" fill="none" stroke="#5a6a70" stroke-opacity="0.4" stroke-width="2"/>
<circle cx="1407.4" cy="843.2" r="12.1" fill="#dde2e2" stroke="url(#gRing)" stroke-width="2.1"/>
<circle cx="1407.4" cy="843.2" r="10.9" fill="none" stroke="#b4ecf8" stroke-width="0.8"/>
<text x="1399.7" y="849.4" font-size="17" font-weight="bold" fill="#1c8eb2" textLength="15.4" lengthAdjust="spacingAndGlyphs">M</text>
<polygon points="40.9,857.2 46.9,857.2 43.9,860.8" fill="#222"/>
<polygon points="1428.6,856.8 1434.6,856.8 1431.6,860.4" fill="#222"/>
<ellipse cx="551" cy="853.4" rx="10.5" ry="2.4" fill="#000" fill-opacity="0.36" filter="url(#isd2)"/>
<rect x="542.5" y="833.5" width="17.4" height="16.6" fill="#fff" stroke="#3f82d0" stroke-width="1.5"/>
<path d="M550.8,833.5 L550.8,842.2 L560,842.2" fill="none" stroke="#3f82d0" stroke-width="1.3"/>
<ellipse cx="599.6" cy="850.6" rx="10.5" ry="2.4" fill="#000" fill-opacity="0.36" filter="url(#isd2)"/>
<path d="M589,841.2 C593,836.6 596.6,835.6 599.7,835.6 C603,835.6 606.6,836.6 610.6,841.2 C606.6,845.8 603,846.8 599.7,846.8 C596.6,846.8 593,845.8 589,841.2 Z" fill="#2f78c8"/>
<circle cx="599.7" cy="841.2" r="3.9" fill="#dfe6ee"/><circle cx="599.7" cy="841.2" r="2.1" fill="#2f78c8"/>
<ellipse cx="649" cy="854.4" rx="10.5" ry="2.4" fill="#000" fill-opacity="0.36" filter="url(#isd2)"/>
<polygon points="649,833.2 658,837.8 658,848 649,852.6 640,848 640,837.8" fill="#fff" stroke="#5c98dc" stroke-width="1"/>
<path d="M649,842.9 L649,852.6 M649,842.9 L640,837.8 M649,842.9 L658,837.8" stroke="#8db8e8" stroke-width="0.8" fill="none"/>
<path d="M649,833.2 L649,842.9 L640,848 M649,842.9 L658,848" stroke="#c4daf2" stroke-width="0.7" fill="none"/>
<ellipse cx="698" cy="852.8" rx="10.5" ry="2.4" fill="#000" fill-opacity="0.36" filter="url(#isd2)"/>
<polygon points="688,838.4 698.6,834.6 707.8,837.8 697.6,841.8" fill="#a6c6ec"/>
<polygon points="688,838.4 697.6,841.8 697.6,850 688,846" fill="#9cbce4"/>
<polygon points="697.6,841.8 707.8,837.8 707.8,845.8 697.6,850" fill="#8cb0dc"/>
<ellipse cx="745.6" cy="854" rx="10.5" ry="2.4" fill="#000" fill-opacity="0.36" filter="url(#isd2)"/>
<path d="M748.6,844.6 L756.4,851.8" stroke="#2f78c8" stroke-width="3" stroke-linecap="round"/>
<circle cx="744.3" cy="840.1" r="5.6" fill="#e6ecf2" stroke="#2f78c8" stroke-width="1.7"/>
<polygon points="744.3,837 747,838.4 747,841.6 744.3,843 741.6,841.6 741.6,838.4" fill="#fff" stroke="#7aa8dc" stroke-width="0.6"/>
<ellipse cx="795.6" cy="853.4" rx="10.5" ry="2.4" fill="#000" fill-opacity="0.36" filter="url(#isd2)"/>
<rect x="790.6" y="834.2" width="10" height="5.6" rx="0.8" fill="#e8eef4" stroke="#2f78c8" stroke-width="1.2"/>
<rect x="787.8" y="838.8" width="15.6" height="7.6" rx="1.6" fill="#2f78c8"/>
<rect x="790.8" y="843" width="9.6" height="6.6" rx="0.6" fill="#e8eef4" stroke="#2f78c8" stroke-width="1.2"/>
<rect x="792.6" y="845" width="4.4" height="0.9" fill="#2f78c8"/><rect x="792.6" y="846.8" width="3" height="0.9" fill="#2f78c8"/>
<circle cx="800.8" cy="841" r="0.8" fill="#dfe9f4"/>
<rect x="821.6" y="834.4" width="91.8" height="18.8" fill="#fbfbfb" stroke="#8a8a8a" stroke-width="1"/>
<rect x="898.4" y="835" width="14.4" height="17.6" fill="#c6c6c6"/>
<polygon points="902.8,840.8 908,840.8 905.4,843.8" fill="#222"/>
<rect x="0" y="870" width="1440" height="4" fill="#2a66dc"/>
<rect x="0" y="870" width="1440" height="1" fill="#3f80ee"/>
<rect x="0" y="870" width="93" height="4" fill="#3c9a3c"/><rect x="3" y="871.5" width="88" height="2.5" fill="#6fbd6f"/>
<rect x="100" y="870.6" width="41" height="3.4" fill="#b7cdf4"/>
<rect x="1309.5" y="870.6" width="131" height="3.4" fill="#18a4ee"/><rect x="1308.6" y="870.6" width="1" height="3.4" fill="#0c3c90"/>
</svg>
</body></html>
